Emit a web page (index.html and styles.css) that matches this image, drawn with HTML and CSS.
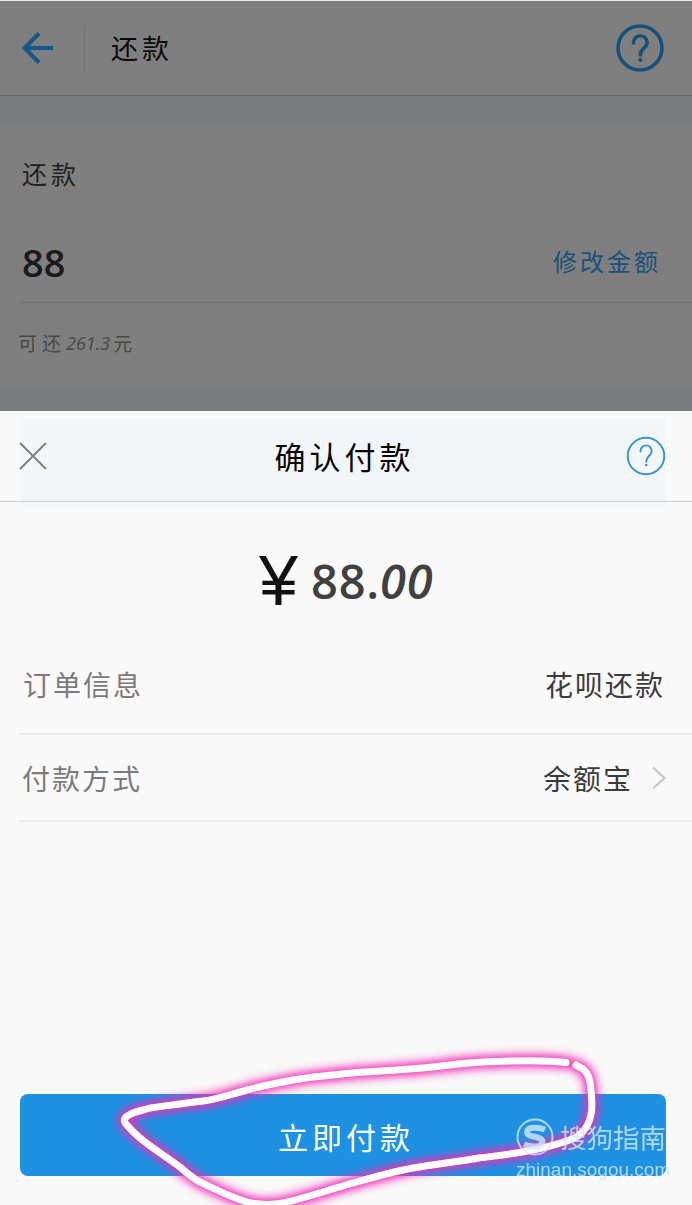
FILE: index.html
```html
<!DOCTYPE html>
<html lang="zh-CN">
<head>
  <meta charset="UTF-8">
  <title>还款</title>
  <link rel="stylesheet" href="styles.css">
</head>
<body>
  <div class="page">
    <header class="topbar">
      <svg class="back" width="34" height="34" viewBox="0 0 34 34">
        <path d="M19 2.5 4.5 17 19 31.5M5 17h28"/>
      </svg>
      <span class="divider"></span>
      <h1>还款</h1>
      <svg class="help" width="48" height="48" viewBox="0 0 48 48">
        <circle cx="24" cy="24" r="22"/>
        <path d="M17.500 19v-.5a6.800 6.800 0 0 1 13.600 0c0 5.500-6.800 6-6.800 12.500"/>
        <circle class="dot" cx="24.300" cy="36" r="2"/>
      </svg>
    </header>
    <section class="repay">
      <div class="repay-label">还款</div>
      <div class="repay-row">
        <span class="repay-value">88</span>
        <a class="repay-edit">修改金额</a>
      </div>
      <div class="repay-tip">可还<span class="tip-num">261.3</span>元</div>
    </section>
  </div>

  <div class="sheet">
    <div class="sheet-head">
      <svg class="close" width="28" height="28" viewBox="0 0 28 28">
        <path d="M1 1l26 26M27 1 1 27"/>
      </svg>
      <h2>确认付款</h2>
      <svg class="help light" width="40" height="40" viewBox="0 0 40 40">
        <circle cx="20" cy="20" r="18.300"/>
        <path d="M14.500 15.500v-.5a5.600 5.600 0 0 1 11.200 0c0 4.700-5.500 5-5.500 10.700"/>
        <circle class="dot" cx="20.200" cy="29" r="1.300"/>
      </svg>
    </div>
    <div class="amount">
      <span class="yen">¥</span>
      <span class="num">88.</span><span class="num slant">00</span>
    </div>
    <div class="row order">
      <span class="row-label">订单信息</span>
      <span class="row-value">花呗还款</span>
    </div>
    <div class="row method">
      <span class="row-label">付款方式</span>
      <span class="row-value">余额宝</span>
      <svg class="chevron" width="16" height="24" viewBox="0 0 16 24">
        <path d="M2 1.500 13.500 12 2 22.500"/>
      </svg>
    </div>
    <button class="pay" type="button">立即付款</button>
  </div>

  <!-- hand drawn circle round the pay button -->
  <svg class="marker" width="692" height="1205" viewBox="0 0 692 1205">
    <defs>
      <filter id="glow" filterUnits="userSpaceOnUse" x="80" y="1020" width="560" height="185">
        <feGaussianBlur stdDeviation="4"/>
      </filter>
      <path id="loop" d="M566 1062.500C550 1060.500 532 1060.500 512 1061C495 1061.500 480 1062 463 1063.500C440 1066 425 1068 403 1069.500C383 1071 365 1071.500 346 1073.500C326 1076 310 1076.500 293 1080C277 1083 262 1086 247 1090C232 1094 218 1099 203 1101C184 1103 166 1106 150 1108C144 1110 138 1111 133 1113C126 1116 122 1119 126 1124C131 1130 134 1133 140 1138C153 1149 167 1157 180 1167C187 1173 192 1178 200 1182C215 1189 230 1197 247 1202C259 1205 271 1205 283 1203C305 1198 325 1191 346 1185C368 1179 390 1172 413 1168C435 1164 457 1162 479 1158C502 1155 525 1153 546 1147C557 1144 568 1142 578 1136C587 1130 590 1122 591.500 1112C592.500 1104 591.500 1096 591 1090C590.500 1082 589 1074 584 1070C581 1067 578 1067 576 1065"/>
    </defs>
    <use href="#loop" class="glow" filter="url(#glow)"/>
    <use href="#loop" class="line"/>
  </svg>

  <div class="watermark">
    <div class="wm-top">
      <svg width="38" height="38" viewBox="0 0 38 38">
        <circle cx="19" cy="19" r="17.500"/>
        <path d="M29 11.500C21 8.500 11 9 11 14.200C11 20 26.500 17.500 26.500 23.800C26.500 29.500 16 29.500 8 26.500"/>
      </svg>
      <span class="wm-name">搜狗指南</span>
    </div>
    <div class="wm-url">zhinan.sogou.com</div>
  </div>
</body>
</html>
```

FILE: styles.css
```css
* {
  box-sizing: border-box;
}
body {
  margin: 0;
  width: 692px;
  height: 1205px;
  overflow: hidden;
  position: relative;
  display: flex;
  flex-direction: column;
  background: #f9f9f9;
  font-family: "Noto Sans CJK SC", sans-serif;
}
h1, h2 {
  margin: 0;
  font-weight: 400;
}
svg {
  display: block;
  flex: none;
  fill: none;
}

/* dimmed page behind the sheet */
.page {
  height: 411px;
  flex: none;
  background: #7a7b7d;
}
.topbar {
  height: 96px;
  display: flex;
  align-items: center;
  padding: 0 28px 0 20px;
  background: #7f7f7f;
  border-top: 1px solid #e6ecea;
  border-bottom: 1px solid #646566;
}
.back {
  stroke: #15598c;
  stroke-width: 4;
}
.divider {
  width: 1px;
  height: 47px;
  margin-left: 30px;
  background: #747474;
}
.topbar h1 {
  flex: 1;
  margin-left: 26px;
  font-size: 27px;
  line-height: 40px;
  letter-spacing: 4px;
  color: #0b0b0b;
}
.help {
  stroke: #15507a;
  stroke-width: 3.6;
  stroke-linecap: round;
}
.help .dot {
  fill: #15507a;
  stroke: none;
}
.repay {
  height: 264px;
  margin-top: 28px;
  padding: 30px 0 0 20px;
  background: #7f7f7f;
}
.repay-label {
  padding-left: 2px;
  font-size: 25px;
  line-height: 38px;
  letter-spacing: 4px;
  color: #222;
}
.repay-row {
  height: 111px;
  display: flex;
  justify-content: space-between;
  padding: 45px 31px 0 2px;
  border-bottom: 1px solid #717171;
}
.repay-value {
  font-family: "Open Sans", sans-serif;
  font-size: 38px;
  font-weight: 600;
  line-height: 50px;
  color: #1a1a1a;
}
.repay-edit {
  font-size: 24px;
  line-height: 47px;
  letter-spacing: 3px;
  color: #18527c;
}
.repay-tip {
  display: flex;
  margin: 26px 0 0 -2px;
  font-size: 19px;
  line-height: 28px;
  letter-spacing: 5px;
  color: #484848;
}
.tip-num {
  font-family: "Open Sans", sans-serif;
  font-style: italic;
  font-size: 18px;
  letter-spacing: 0;
  margin-right: 3px;
}

/* payment sheet */
.sheet {
  flex: 1;
  display: flex;
  flex-direction: column;
  background: linear-gradient(#f3f6f8 92%, #f9f9f9) 20px 7px / 646px 92px no-repeat #f9f9f9;
}
.sheet-head {
  height: 91px;
  display: flex;
  align-items: center;
  justify-content: space-between;
  padding: 0 26px 0 19px;
  border-bottom: 1px solid #cfd1d2;
}
.close {
  stroke: #7d8082;
  stroke-width: 1.8;
}
.sheet-head h2 {
  padding-left: 16px;
  font-size: 31px;
  line-height: 46px;
  letter-spacing: 4px;
  color: #050505;
}
.help.light {
  stroke: #3294d2;
  stroke-width: 1.9;
}
.help.light .dot {
  fill: #3294d2;
}
.amount {
  height: 136px;
  display: flex;
  align-items: center;
  padding: 22px 0 0 259px;
}
.yen {
  width: 52px;
  font-family: "Liberation Sans", sans-serif;
  font-size: 70px;
  line-height: 60px;
  color: #111;
}
.num {
  font-family: "Open Sans", sans-serif;
  font-size: 47px;
  font-weight: 600;
  line-height: 60px;
  letter-spacing: .8px;
  color: #404040;
}
.slant {
  font-style: italic;
}
.row {
  display: flex;
  align-items: center;
  margin-left: 19px;
  border-bottom: 2px solid #e9eaea;
  font-size: 28px;
  line-height: 40px;
  letter-spacing: 2px;
}
.order {
  height: 97px;
  padding: 0 27px 3px 4px;
}
.method {
  height: 87px;
  padding: 0 25px 0 3px;
}
.row-label {
  flex: 1;
  color: #7b7b7b;
}
.row-value {
  color: #3b3b3b;
}
.chevron {
  margin-left: 18px;
  stroke: #c8c8c8;
  stroke-width: 2.2;
}
.pay {
  width: 646px;
  height: 82px;
  margin: auto 0 29px 20px;
  padding: 1px 0 0 6px;
  border: none;
  border-radius: 8px;
  background: #1e91e3;
  color: #fff;
  font-family: inherit;
  font-size: 30px;
  letter-spacing: 4px;
}

.marker {
  position: absolute;
  left: 0;
  top: 0;
  pointer-events: none;
}
.glow {
  stroke: #f32cb6;
  stroke-width: 13;
  stroke-linecap: round;
}
.line {
  stroke: #fff;
  stroke-width: 7;
  stroke-linecap: round;
  stroke-linejoin: round;
}

.watermark {
  position: absolute;
  left: 516px;
  top: 1117px;
  color: #d3e9f9;
  white-space: nowrap;
  opacity: .8;
}
.wm-top {
  display: flex;
  align-items: center;
  height: 40px;
}
.wm-top circle {
  stroke: #d3e9f9;
  stroke-width: 2;
}
.wm-top path {
  stroke: #d3e9f9;
  stroke-width: 6;
}
.wm-name {
  margin-left: 6px;
  font-size: 26.5px;
  line-height: 40px;
}
.wm-url {
  margin-top: 1px;
  font-family: "Liberation Sans", sans-serif;
  font-size: 19px;
  line-height: 24px;
}
```
